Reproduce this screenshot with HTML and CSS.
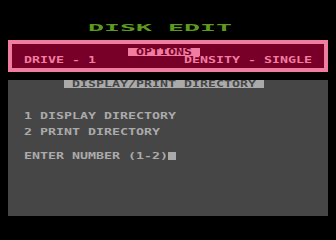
FILE: index.html
```html
<!DOCTYPE html>
<html lang="en">
<head>
    <meta charset="UTF-8">
    <meta name="viewport" content="width=device-width, initial-scale=1.0">
    <title>Disk Edit</title>
    <link rel="stylesheet" href="styles.css">
</head>
<body>
    <div class="screen">
        <div class="title"><span class="txt">DISK EDIT</span></div>

        <div class="options">
            <div class="options-head">
                <div class="tag"><span class="txt">OPTIONS</span></div>
            </div>
            <div class="options-row">
                <span class="txt">DRIVE - 1</span>
                <span class="txt">DENSITY - SINGLE</span>
            </div>
        </div>

        <div class="panel">
            <div class="panel-head"><span class="txt">DISPLAY/PRINT DIRECTORY</span></div>
            <div class="menu">
                <div class="line"><span class="txt">1 DISPLAY DIRECTORY</span></div>
                <div class="line"><span class="txt">2 PRINT DIRECTORY</span></div>
            </div>
            <div class="line prompt">
                <span class="txt">ENTER NUMBER (1-2)</span><span class="cursor"></span>
            </div>
        </div>
    </div>
</body>
</html>
```

FILE: styles.css
```css
body {
    margin: 0;
    background-color: #000;
    font-family: "DejaVu Sans Mono", "Liberation Mono", monospace;
    font-weight: bold;
    font-size: 13.3px;
    line-height: 8px;
}
.screen {
    width: 336px;
    height: 240px;
    padding-top: 24px;
    box-sizing: border-box;
}
/* atari chars: 8px cell, squashed to ~7px caps */
.txt {
    display: inline-block;
    height: 8px;
    line-height: 8px;
    vertical-align: top;
    white-space: pre;
    transform: translateY(0.5px) scaleY(0.68);
}
.title {
    height: 8px;
    margin-left: 88px;
    color: #5c9c1c;
}
.title .txt {
    transform: translateY(0.5px) scale(2, 0.68);
    transform-origin: left center;
}
.options {
    margin: 8px 8px 0;
    border: 4px solid #f07ca0;
    background-color: #780028;
    padding: 4px 12px;
    color: #f07ca0;
}
.options-head {
    height: 8px;
    padding-left: 104px;
}
.tag {
    width: 72px;
    height: 8px;
    background-color: #f07ca0;
    color: #780028;
    text-align: center;
}
.options-row {
    display: flex;
    justify-content: space-between;
    height: 8px;
}
.panel {
    margin: 8px 8px 0;
    height: 136px;
    background-color: #464646;
    color: #aaaaaa;
    padding-left: 16px;
}
.panel-head {
    width: 200px;
    height: 8px;
    margin-left: 40px;
    background-color: #aaaaaa;
    color: #464646;
    text-align: center;
}
.menu {
    display: flex;
    flex-direction: column;
    gap: 8px;
    margin-top: 24px;
}
.line {
    height: 8px;
    display: flex;
}
.prompt {
    margin-top: 16px;
}
.cursor {
    width: 8px;
    height: 8px;
    background-color: #aaaaaa;
}
```
